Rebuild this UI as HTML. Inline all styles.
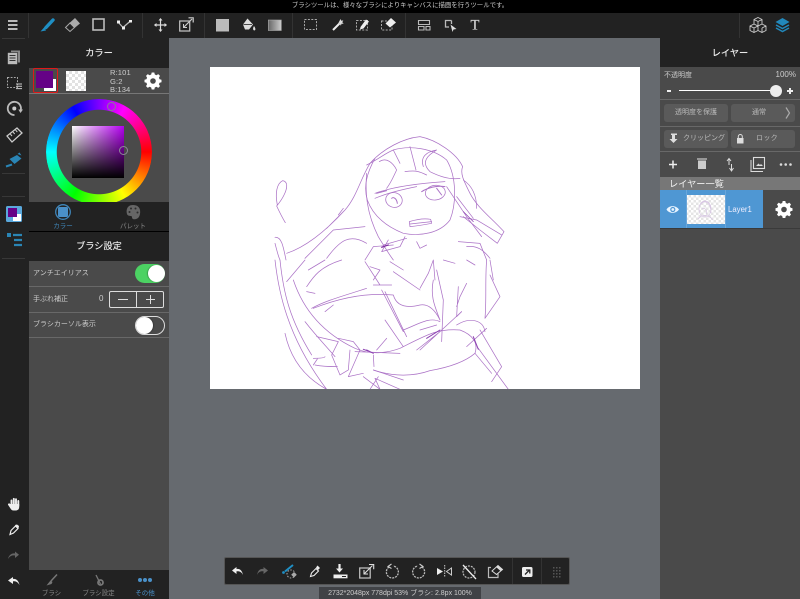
<!DOCTYPE html>
<html><head><meta charset="utf-8">
<style>
*{box-sizing:border-box;margin:0;padding:0}
html,body{width:800px;height:599px;overflow:hidden;background:#666a6f}
body{position:relative;font-family:"Liberation Sans","Noto Sans CJK JP",sans-serif;color:#ddd}
.a{position:absolute}
.t{position:absolute;white-space:nowrap;line-height:1}
.sep{position:absolute;height:1px;background:#686868}
.btn{position:absolute;background:#5a5a5a;border-radius:3px;color:#bbb;font-size:7px;line-height:18px;text-align:center}
.h{font-size:9.2px;color:#eee;text-shadow:0 0 .4px #eee;text-align:center}
svg{position:absolute;left:0;top:0}
</style></head><body>
<!-- canvas -->
<div class="a" style="left:210px;top:67px;width:430px;height:322px;background:#fff"></div>
<!-- bars -->
<div class="a" style="left:0;top:0;width:800px;height:13px;background:#000"></div>
<div class="t" style="left:0;width:800px;top:3px;text-align:center;font-size:6.4px;color:#ccc">ブラシツールは、様々なブラシによりキャンバスに描画を行うツールです。</div>
<div class="a" style="left:0;top:13px;width:800px;height:25px;background:#222"></div>
<div class="a" style="left:0;top:38px;width:29px;height:561px;background:#222"></div>
<!-- left panel -->
<div class="a" style="left:29px;top:38px;width:140px;height:561px;background:#4a4a4a"></div>
<div class="a" style="left:29px;top:38px;width:140px;height:30px;background:#222"></div>
<div class="t h" style="left:29px;width:140px;top:49px">カラー</div>
<div class="a" style="left:29px;top:93px;width:140px;height:1px;background:#777"></div>
<div class="a" style="left:44px;top:79px;width:12px;height:12px;background:#fff"></div>
<div class="a" style="left:36px;top:71px;width:17px;height:17px;background:#650286"></div>
<div class="a" style="left:33px;top:68px;width:25px;height:25px;border:1px solid #e01818;border-radius:2px"></div>
<div class="a" style="left:66px;top:71px;width:20px;height:20px;background-color:#fff;background-image:conic-gradient(#e2e2e2 25%,#fff 25% 50%,#e2e2e2 50% 75%,#fff 75%);background-size:6px 6px"></div>
<div class="t" style="left:110px;top:69px;font-size:7.6px;line-height:8.6px;letter-spacing:.1px;color:#ccc">R:101<br>G:2<br>B:134</div>
<!-- wheel -->
<div class="a" style="left:29px;top:94px;width:140px;height:108px;overflow:hidden">
<div class="a" style="left:16.5px;top:5px;width:106px;height:106px;border-radius:50%;background:conic-gradient(from 90deg,#f00,#ff0,#0f0,#0ff,#00f,#f0f,#f00);-webkit-mask:radial-gradient(circle,transparent 42px,#000 42.5px);mask:radial-gradient(circle,transparent 42px,#000 42.5px)"></div>
<div class="a" style="left:43px;top:32px;width:52px;height:52px;background:linear-gradient(to bottom,transparent,#000),linear-gradient(to right,#fff,#b400f0)"></div>
<div class="a" style="left:77.500px;top:8px;width:9px;height:9px;border:1.5px solid #8a7a9a;border-radius:50%"></div>
<div class="a" style="left:90px;top:52px;width:9px;height:9px;border:1.5px solid #8a8a94;border-radius:50%"></div>
</div>
<div class="a" style="left:29px;top:202px;width:140px;height:30px;background:#222"></div>
<div class="a" style="left:29px;top:231px;width:140px;height:1px;background:#000"></div>
<div class="a" style="left:29px;top:232px;width:140px;height:29px;background:#222"></div>
<div class="t h" style="left:29px;width:140px;top:241.500px">ブラシ設定</div>
<div class="t" style="left:33px;top:269.500px;font-size:7px;color:#ccc">アンチエイリアス</div>
<div class="t" style="left:33px;top:295.500px;font-size:7px;color:#ccc">手ぶれ補正</div>
<div class="t" style="left:99px;top:295px;font-size:8px;color:#ccc">0</div>
<div class="t" style="left:33px;top:321px;font-size:7px;color:#ccc">ブラシカーソル表示</div>
<div class="sep" style="left:29px;top:286px;width:140px"></div>
<div class="sep" style="left:29px;top:312px;width:140px"></div>
<div class="sep" style="left:29px;top:337px;width:140px"></div>
<div class="a" style="left:135px;top:264px;width:30px;height:19px;border-radius:10px;background:#4cd263"></div>
<div class="a" style="left:148px;top:265px;width:17px;height:17px;border-radius:50%;background:#fff;box-shadow:-1px 0 1px rgba(0,0,0,.25)"></div>
<div class="a" style="left:135px;top:316px;width:30px;height:19px;border-radius:10px;border:1px solid #ddd"></div>
<div class="a" style="left:136px;top:317px;width:17px;height:17px;border-radius:50%;background:#fff;box-shadow:1px 0 1px rgba(0,0,0,.25)"></div>
<div class="a" style="left:109px;top:291px;width:55px;height:17px;border:1px solid #ddd;border-radius:2px"></div>
<div class="a" style="left:136px;top:291px;width:1px;height:17px;background:#ddd"></div>
<div class="a" style="left:29px;top:570px;width:140px;height:29px;background:#222"></div>
<div class="t" style="left:29px;width:45px;text-align:center;top:590.500px;font-size:6.500px;color:#888">ブラシ</div>
<div class="t" style="left:76px;width:45px;text-align:center;top:590.500px;font-size:6.500px;color:#888">ブラシ設定</div>
<div class="t" style="left:122px;width:46px;text-align:center;top:590.500px;font-size:6.500px;color:#4a90c8">その他</div>
<div class="t" style="left:29px;width:68px;text-align:center;top:223.500px;font-size:6.500px;color:#3f85b8">カラー</div>
<div class="t" style="left:99px;width:68px;text-align:center;top:223.500px;font-size:6.500px;color:#888">パレット</div>
<!-- right panel -->
<div class="a" style="left:660px;top:38px;width:140px;height:561px;background:#4a4a4a"></div>
<div class="a" style="left:660px;top:38px;width:140px;height:29px;background:#222"></div>
<div class="t h" style="left:660px;width:140px;top:49px">レイヤー</div>
<div class="t" style="left:664px;top:71.500px;font-size:7px;color:#ccc">不透明度</div>
<div class="t" style="right:4px;top:71px;font-size:8px;color:#ccc">100%</div>
<div class="a" style="left:667px;top:90px;width:4px;height:1.500px;background:#eee"></div>
<div class="a" style="left:787px;top:90px;width:6px;height:1.500px;background:#eee"></div>
<div class="a" style="left:789.300px;top:88px;width:1.500px;height:6px;background:#eee"></div>
<div class="a" style="left:679px;top:90px;width:95px;height:1px;background:#fff"></div>
<div class="a" style="left:770px;top:84.500px;width:12px;height:12px;border-radius:50%;background:#eee"></div>
<div class="sep" style="left:660px;top:99px;width:140px"></div>
<div class="btn" style="left:664px;top:104px;width:64px">透明度を保護</div>
<div class="btn" style="left:731px;top:104px;width:64px;padding-right:8px">通常</div>
<div class="sep" style="left:660px;top:126px;width:140px"></div>
<div class="btn" style="left:664px;top:130px;width:64px;padding-left:16px">クリッピング</div>
<div class="btn" style="left:731px;top:130px;width:64px;padding-left:8px;letter-spacing:.3px">ロック</div>
<div class="sep" style="left:660px;top:151px;width:140px"></div>
<div class="a" style="left:660px;top:177px;width:140px;height:13px;background:#777"></div>
<div class="t" style="left:669px;top:179.500px;font-size:9.200px;color:#f0f0f0">レイヤー一覧</div>
<div class="a" style="left:660px;top:190px;width:103px;height:38px;background:#4f97d3"></div>
<div class="a" style="left:686px;top:195px;width:39px;height:28.500px;background-color:#fff;background-image:conic-gradient(#e4e4e4 25%,#fff 25% 50%,#e4e4e4 50% 75%,#fff 75%);background-size:5px 5px"></div>
<div class="a" style="left:685.500px;top:190px;width:1px;height:38px;background:#6aa6da"></div>
<div class="a" style="left:725px;top:190px;width:1px;height:38px;background:#6aa6da"></div>
<div class="t" style="left:728px;top:205.500px;font-size:7.800px;color:#eef">Layer1</div>
<div class="a" style="left:660px;top:228px;width:140px;height:1px;background:#3a3a3a"></div>
<!-- bottom toolbar -->
<div class="a" style="left:224px;top:557px;width:346px;height:28px;background:#222;border:1px solid #555;border-radius:2px"></div>
<div class="a" style="left:319px;top:587px;width:162px;height:12px;background:#404246"></div>
<div class="t" style="left:319px;width:162px;text-align:center;top:589.500px;font-size:7px;color:#ccc">2732*2048px 778dpi 53% ブラシ: 2.8px 100%</div>

<svg width="800" height="599" viewBox="0 0 800 599" fill="none">
<defs>
<g id="gear"><path d="M-1.300-7 1.300-7 1.800-5 3.500-4.300 5.200-5.400 7-3.600 5.900-1.800 6.600-.2 8.500 .3 8.500 2.700 6.600 3.200 5.900 4.800 7 6.600 5.200 8.400 3.500 7.300 1.800 8 1.300 10-1.300 10-1.800 8-3.500 7.300-5.200 8.400-7 6.600-5.900 4.800-6.600 3.200-8.500 2.700-8.500 .3-6.600-.2-5.900-1.800-7-3.600-5.200-5.400-3.500-4.300-1.800-5Z" fill="#fff" transform="translate(0,-1.500)"/><circle r="2.800" fill="#4a4a4a"/></g>
<linearGradient id="gr"><stop offset="0" stop-color="#666"/><stop offset="1" stop-color="#ccc"/></linearGradient>
</defs>
<!-- top toolbar separators -->
<g stroke="#333"><path d="M28.500 13V38M142.500 13V38M204.500 13V38M292.500 13V38M405.500 13V38M739.500 13V38"/></g>
<!-- hamburger -->
<path d="M8 21H17.500M8 25H17.500M8 29H17.500" stroke="#eee" stroke-width="1.500"/>
<!-- brush -->
<path d="M53 20 46 27.500" stroke="#1f8fc4" stroke-width="3.400" stroke-linecap="round"/><path d="M44.500 27 40.500 31.500 46 30.500Z" fill="#1f8fc4"/>
<!-- eraser -->
<path d="M70 23 65.500 27.500 70 31.500 74.500 27.500Z" stroke="#aaa" stroke-width="1"/><path d="M75 18 80 23.500 74.500 28 69.500 23Z" fill="#aaa"/>
<!-- rect -->
<rect x="93" y="19" width="11" height="11" stroke="#bbb" stroke-width="1.600"/>
<!-- polyline -->
<path d="M118 22 123 27.500 131 20.500" stroke="#bbb" stroke-width="1.300"/><path d="M117 20.500h3v3h-3zM122 26.500h3v3h-3z" fill="#eee"/><path d="M129 20h3v2.500h-3z" fill="#eee"/>
<!-- move -->
<path d="M160.500 19V31M154.500 25H166.500" stroke="#ddd" stroke-width="1.200"/><path d="M160.500 18 158.500 20.500H162.500ZM160.500 32 158.500 29.500H162.500ZM154 25 156.500 23V27ZM167 25 164.500 23V27Z" fill="#ddd"/>
<!-- transform -->
<rect x="179.700" y="21" width="10" height="10" stroke="#bbb" stroke-width="1.300"/><path d="M184 27 192 19M188.500 17.800H193.200V22.500" stroke="#ccc" stroke-width="1.200"/><path d="M183.500 24V27.500H187" stroke="#ccc"/>
<!-- fill color -->
<rect x="216" y="19" width="13" height="12.500" fill="#bbb"/>
<!-- bucket -->
<path d="M247.500 18.500 253 24.500 249 29.500H245L243 24.500Z" fill="#ddd"/><path d="M243.500 24.500H252" stroke="#222" stroke-width=".8"/><path d="M254 26C255.500 28 256 30 254.300 30.500 252.700 30 252.800 28 254 26Z" fill="#ddd"/>
<!-- gradient -->
<rect x="268.300" y="20" width="13" height="10.500" fill="url(#gr)" stroke="#aaa" stroke-width=".6"/>
<!-- selection tools -->
<rect x="304.500" y="19.500" width="12" height="10" stroke="#aaa" stroke-dasharray="2 1.400"/>
<path d="M333 30 339.500 23.500" stroke="#eee" stroke-width="2"/><path d="M340.500 19l.8 1.800 2-.4-1 1.800 1.400 1.500-2.200.1-.6 2-1.100-2-2 .4 1-1.900z" fill="#ddd"/>
<rect x="356.500" y="20.500" width="11" height="9.500" stroke="#aaa" stroke-dasharray="2 1.400"/><path d="M360.500 27 366 19.500 369 21.500 363.500 28.500 360 29.500Z" fill="#eee"/>
<rect x="381.500" y="21" width="10.500" height="9" stroke="#aaa" stroke-dasharray="2 1.400"/><path d="M385.500 23.500 391 18 396 22.500 390 27.500Z" fill="#eee"/>
<!-- layout -->
<path d="M418.500 20.500H429.500V24.500H418.500ZM418.500 26.500H424V30H418.500ZM426 26.500H430V30H426Z" stroke="#bbb" stroke-width="1.100"/>
<path d="M451.500 20.500H445.500V27H449M451.500 20.500V24" stroke="#bbb" stroke-width="1.300"/><path d="M450.500 24.500 456.500 29 453.500 29.500 452.500 32Z" fill="#ddd"/>
<text x="470.500" y="29.500" font-family="Liberation Serif" font-size="14.500" fill="#ccc" stroke="#ccc" stroke-width=".25">T</text>
<!-- cubes & layers -->
<path d="M758 17.500l4 2V24l-4 2-4-2v-4.500ZM754 19.500l4 2 4-2M758 21.500V26M754 24l4 2v4.500l-4 2-4-2V26ZM762 24l4 2v4.500l-4 2-4-2M750 26l4 2 4-2M754 28v4.500M762 28l4-2M762 28v4.500" stroke="#ccc" stroke-width=".9"/>
<path d="M782.500 18 789.500 22 782.500 26 775.500 22Z" fill="#2288bb"/><path d="M776 25 782.500 28.500 789 25M776 28 782.500 31.500 789 28" stroke="#2288bb" stroke-width="1.500"/>

<!-- left rail -->
<path d="M2 38.500H25M2 173.500H25M2 196.500H25M2 258.500H25" stroke="#383838"/>
<rect x="11" y="50.500" width="9" height="12" fill="#888"/><rect x="7.500" y="52.500" width="10" height="12" fill="#bbb" stroke="#222" stroke-width=".6"/><path d="M9.500 55.500H15.500M9.500 58H15.500M9.500 60.500H15.500" stroke="#333"/>
<rect x="7.500" y="77.500" width="10" height="10" stroke="#aaa" stroke-dasharray="1.800 1.400"/><path d="M16 84H22M16 86.300H22M16 88.600H22" stroke="#ccc"/>
<path d="M14.500 115A6.600 6.600 0 1 1 20.800 109.800" stroke="#bbb" stroke-width="1.800"/><path d="M18.300 109.500 20.500 113 23 109.500Z" fill="#bbb"/><circle cx="14.300" cy="108.500" r="2" fill="#ccc"/>
<path d="M7 136 17 128 22 133 12 142Z" stroke="#ccc" stroke-width="1.300"/><path d="M10.300 134 12 136M13 132 14.700 134M15.500 130 17.300 132" stroke="#ccc"/>
<path d="M9.500 159 17 155 21.500 158.500 14.500 164Z" fill="#2a85b5"/><path d="M17.500 154 19.500 152.500 21.500 155.500" fill="#2a85b5"/><path d="M6 166.500 12 164.500" stroke="#2a85b5" stroke-width="2"/>
<rect x="6" y="206" width="16" height="16" rx="1.500" fill="#5aa8dc"/><rect x="13" y="214" width="8" height="7" fill="#fff"/><rect x="8" y="208" width="9" height="9" fill="#650286"/>
<path d="M7 233H11V237H7Z" fill="#2a85b5"/><path d="M13 235H22M14 240H22M14 245H22" stroke="#2a85b5" stroke-width="2.200"/>
<!-- rail bottom -->
<g stroke="#eee" stroke-width="1.900" stroke-linecap="round"><path d="M11.500 505V500.500M13.800 505V498.800M16 505V499.200M18.300 506V501"/></g>
<path d="M10.500 504H19.200V507C19.200 509.500 17.500 510.500 15.500 510.500H13.500C12 510.500 11 509.500 10.500 508.500L8 504.800C7.700 503.500 9.200 502.700 10.200 504Z" fill="#eee"/>
<path d="M10 534.500 11 530.500 15.500 526 18 528.500 13.500 533Z" stroke="#eee" stroke-width="1.200"/><path d="M15 525 17 524.500 19 526 18.500 528.500Z" fill="#eee"/>
<path d="M19 559C17 555.500 14 555 12 555.500V558L8 554.800 12 551.500V553.500C15.500 553 18 555 19 559Z" fill="#666" transform="matrix(-1 0 0 1 27 0)"/>
<path d="M19.500 585C17.500 581.500 15 581 13 581.300V584L8 580.500 13 577V579C16 578.500 18.500 580.500 19.500 585Z" fill="#eee"/>

<use href="#gear" x="153" y="81"/>
<!-- tab icons -->
<circle cx="63" cy="212" r="7.300" stroke="#3f85b8" stroke-width="1.300"/><rect x="58" y="207" width="10" height="10" rx="1.500" fill="#4a90c8"/>
<path d="M133 205C126.500 205 126 211 127 214 128 217 132 215 132 217 132 219.500 134 219.500 136 219 140 218 140.500 213 140 210 139.500 207 137 205 133 205Z" fill="#666"/><g fill="#2c2c2c"><circle cx="131" cy="208.500" r="1"/><circle cx="135.500" cy="208.500" r="1"/><circle cx="137.500" cy="212.500" r="1"/><circle cx="129.500" cy="212" r="1"/></g>
<!-- stepper -->
<path d="M118 299.500H128M146 299.500H155M150.500 295V304" stroke="#ddd" stroke-width="1"/>
<!-- bottom tabs -->
<path d="M57 574.500 51 581" stroke="#777" stroke-width="1.500"/><path d="M50.500 580.500 46.500 585.500 51.500 584 52.500 582Z" fill="#777"/>
<path d="M93.500 584 98 575" stroke="#777" stroke-width="1.300" transform="matrix(-1 0 0 1 194 0)"/><circle cx="100.500" cy="582.500" r="2.500" stroke="#777" stroke-width="1.800"/>
<circle cx="140" cy="580" r="2" fill="#4a90c8"/><circle cx="145" cy="580" r="2" fill="#4a90c8"/><circle cx="150" cy="580" r="2" fill="#4a90c8"/>

<!-- right panel icons -->
<path d="M786 107.500 789.500 113 786 118.500" stroke="#aaa" stroke-width="1.200"/>
<path d="M671 133.500H677V135H675V139H677.500L673.500 143 669.500 139H672V135H671Z" fill="#ddd"/>
<rect x="737" y="138" width="6.500" height="5.500" fill="#ddd"/><path d="M738.300 138V136.500a2 2 0 0 1 4 0V138" stroke="#ddd"/>
<path d="M669 164.500H677M673 160.500V168.500" stroke="#eee" stroke-width="1.500"/>
<path d="M698 160.500H706V169H698Z" fill="#ccc"/><path d="M697 159H707" stroke="#ccc" stroke-width="1.200"/>
<path d="M729 159V165M727 161 729 158.500 731 161M731.500 164V170.500M729.500 168 731.500 171 733.500 168" stroke="#ddd" stroke-width="1"/>
<rect x="753.500" y="157.500" width="11" height="11" stroke="#ddd" stroke-width="1.100"/><path d="M751 160V171.500H763" stroke="#ddd"/><path d="M756 166 758.500 163.500 760 165 761 164 763 166Z" fill="#ddd"/>
<circle cx="781" cy="164.500" r="1.300" fill="#ddd"/><circle cx="785.700" cy="164.500" r="1.300" fill="#ddd"/><circle cx="790.500" cy="164.500" r="1.300" fill="#ddd"/>
<path d="M666.500 209.500C669 205 676 205 679 209.500 676 214 669 214 666.500 209.500Z" fill="#e8f4ff"/><circle cx="672.800" cy="209.500" r="2.600" fill="#4f97d3"/><circle cx="672.800" cy="209.500" r="1.400" fill="#e8f4ff"/>
<use href="#gear" x="784" y="209.500"/>
<!-- thumb sketch -->
<g stroke="#d6c4e2" stroke-width=".7"><ellipse cx="705" cy="209" rx="6" ry="8"/><path d="M700 205C705 198 711 203 711 213M698 219C702 214 708 214 713 220M702 209C705 207 708 211 706 214"/></g>

<!-- bottom toolbar icons -->
<path d="M243 575C241.500 571.500 238.500 571 236.500 571.300V574L232 570.500 236.500 567V569C240 568.500 242 570.500 243 575Z" fill="#eee"/>
<path d="M243 575C241.500 571.500 238.500 571 236.500 571.300V574L232 570.500 236.500 567V569C240 568.500 242 570.500 243 575Z" fill="#666" transform="matrix(-1 0 0 1 500 0)"/>
<path d="M293 565 285 571.500" stroke="#1f8fc4" stroke-width="2"/><circle cx="283.500" cy="572.500" r="1.400" fill="#1f8fc4"/><circle cx="291" cy="574" r="4" stroke="#aaa" stroke-dasharray="1.500 1.500"/><path d="M294 572 296.800 574.800 294 577.500 291.200 574.800Z" fill="#aaa"/>
<path d="M310.500 576.500 311.500 573 316 568.500 318.500 571 314 575.500Z" stroke="#eee" stroke-width="1.100"/><path d="M316 567.500 317.500 565.500 320 568 318 570Z" fill="#eee"/>
<path d="M339.500 564V569" stroke="#eee" stroke-width="2.200"/><path d="M336 568.500H343L339.500 572.500Z" fill="#eee"/><rect x="333.500" y="574.500" width="14" height="3.800" fill="#eee"/><path d="M342 576.500H346" stroke="#222"/>
<rect x="359.700" y="568" width="10.500" height="10" stroke="#bbb" stroke-width="1.300"/><path d="M364.500 573.500 372.500 565.500M369 564.500H373.700V569.200M364 570V574H368" stroke="#ddd" stroke-width="1.100"/>
<path d="M389 567A6 6 0 1 0 393 566" stroke="#bbb" stroke-width="1.300" stroke-dasharray="2 1"/><path d="M391.500 564 388 566.500 391.500 568.500" stroke="#ccc" stroke-width="1.100"/>
<path d="M422 567A6 6 0 1 1 418 566" stroke="#bbb" stroke-width="1.300" stroke-dasharray="2 1"/><path d="M419.500 564 423 566.500 419.500 568.500" stroke="#ccc" stroke-width="1.100"/>
<path d="M437 568 443 571.500 437 575Z" fill="#eee"/><path d="M444.700 565V577" stroke="#ccc" stroke-dasharray="1.500 1"/><path d="M451.500 568 446.500 571.500 451.500 575Z" stroke="#ccc"/>
<circle cx="469" cy="572" r="6" stroke="#bbb" stroke-width="1.200" stroke-dasharray="2 1"/><path d="M463 565 476 579" stroke="#eee" stroke-width="1.300"/>
<path d="M491 567.500H488.500V577.500H498V573.500" stroke="#bbb" stroke-width="1.200"/><path d="M492 571 498 565.500 502.500 569.500 496.500 574.500Z" stroke="#ddd"/><path d="M496 567 498 565.500 502.500 569.500 500.500 571Z" fill="#ddd"/>
<path d="M512.500 558V584M541.500 558V584" stroke="#333"/>
<rect x="522" y="567" width="10.500" height="10" rx="1.500" fill="#eee"/><path d="M525 574.500 529 570.500M526 570H529.800V573.500" stroke="#222" stroke-width="1.300"/>
<path d="M553 567h1.500v1.500H553zM556 567h1.500v1.500H556zM559 567h1.500v1.500H559zM553 570h1.500v1.500H553zM556 570h1.500v1.500H556zM559 570h1.500v1.500H559zM553 573h1.500v1.500H553zM556 573h1.500v1.500H556zM559 573h1.500v1.500H559zM553 576h1.500v1.500H553zM556 576h1.500v1.500H556zM559 576h1.500v1.500H559z" fill="#555"/>

<!-- sketch -->
<clipPath id="cv"><rect x="210" y="67" width="430" height="322"/></clipPath>
<g clip-path="url(#cv)">
<g transform="translate(260,130) scale(.3333)" stroke="#ab72c6" stroke-width="2.200" stroke-linecap="round" stroke-linejoin="round">
<path d="M52 225C45 190 50 160 68 152 85 155 82 175 72 195 65 210 55 222 50 228 58 245 68 265 76 278"/>
<path d="M330 100C370 55 430 25 480 20 530 30 590 70 608 110 600 130 610 150 630 190 650 230 690 260 732 305L712 340 660 300 610 260"/>
<path d="M320 105C360 85 375 70 400 60 450 45 520 55 560 90 590 140 590 220 570 270 540 310 480 320 430 310 380 290 340 260 322 210 310 170 320 130 345 85"/>
<path d="M345 190C400 170 480 160 555 155M345 205C380 190 420 180 470 170"/>
<path d="M358 95C380 80 400 100 410 120 400 140 395 155 380 175M400 60 420 100M450 50 468 120M490 110C480 80 500 65 530 60 505 75 480 95 510 125 540 140 570 150 600 145M435 125C470 120 480 125 500 135"/>
<ellipse cx="402" cy="210" rx="25" ry="22" transform="rotate(15 402 210)"/>
<ellipse cx="526" cy="188" rx="30" ry="22" transform="rotate(-8 526 188)"/>
<path d="M350 190 380 182M485 185C500 175 530 165 555 170M395 205C400 200 410 205 412 220M530 175 545 195" stroke-width="3"/>
<path d="M448 275C470 268 495 265 512 268L515 280C490 285 470 288 450 290ZM450 282 515 275"/>
<path d="M330 100C300 150 290 200 255 240 200 300 140 350 80 370M320 130C315 190 320 250 355 320 370 345 385 370 400 390M255 240 200 295M250 235 235 255M135 385 220 300 315 290M200 385C240 330 270 310 320 340"/>
<path d="M610 150C640 170 650 200 650 235M560 170 620 260 665 320M590 200 640 265M600 260 650 270 725 315M595 335 660 340 680 390M620 350C650 345 670 360 690 385"/>
<path d="M45 322C65 320 70 350 78 390M45 340C50 360 55 380 60 390"/>
<path d="M370 345 440 325M385 330 365 365 420 350 435 320M470 335 480 355 500 345M315 390 340 350 400 345"/>
<path d="M365 352 385 345" stroke="#7d2aa0" stroke-width="3.500"/>
<path d="M610 245 640 275" stroke="#8a3fb0"/>
</g>
<g transform="translate(260,260) scale(.3333)" stroke="#ab72c6" stroke-width="2.200" stroke-linecap="round" stroke-linejoin="round">
<path d="M45 0C55 90 80 230 200 388M60 0C70 100 90 180 155 285M75 220C90 290 130 350 200 388M80 65 135 0M145 30 195 0M140 80C160 50 180 20 245 0M140 95 165 100"/>
<path d="M100 60C130 150 190 220 285 265 330 285 380 280 420 265 500 225 530 205 600 210 640 225 655 250 645 280 610 310 550 325 510 332 460 350 400 350 340 330"/>
<path d="M155 145C200 120 260 105 320 85M160 145C210 125 300 95 400 105 410 140 440 145 480 135 510 130 530 160 540 180M195 155 220 135"/>
<path d="M365 90 430 215M375 95 440 230M315 5 360 75M340 75 395 75M330 20 360 30 340 60M375 180 430 260M430 210C480 190 510 170 540 185"/>
<path d="M400 35 480 90M390 5 430 30M480 85 505 40 520 0 525 60M530 30 550 120 545 245M520 60C510 110 525 140 540 180M595 80 590 170 605 155M620 70 600 110 590 140M550 0 585 10M620 0 645 15"/>
<path d="M480 270 605 155M470 270 540 215M480 210 530 195M590 195C630 170 670 180 675 215M620 260 680 205"/>
<path d="M680 0C675 60 680 120 675 175L720 110 690 45M690 0 700 60M660 210 725 320 695 365M655 265 745 388M645 280 695 340"/>
<path d="M160 295C170 295 195 295 195 290M165 315C190 320 220 320 232 320M160 315 172 297M135 185C170 230 200 260 225 290M170 230 235 245 215 285 240 345 265 330 270 270M235 235 280 245 300 270 265 350 310 340M285 275 420 280M340 285 342 320M350 270 380 235M310 350 360 388 345 355 420 388M340 330 430 360M330 388 355 350"/>
<path d="M320 270 340 280M310 268 330 275" stroke="#8a3fb0" stroke-width="3"/>
<path d="M500 235 540 210M640 230 655 268" stroke="#8a3fb0" stroke-width="3"/>
</g>
</g>
</svg>
</body></html>
